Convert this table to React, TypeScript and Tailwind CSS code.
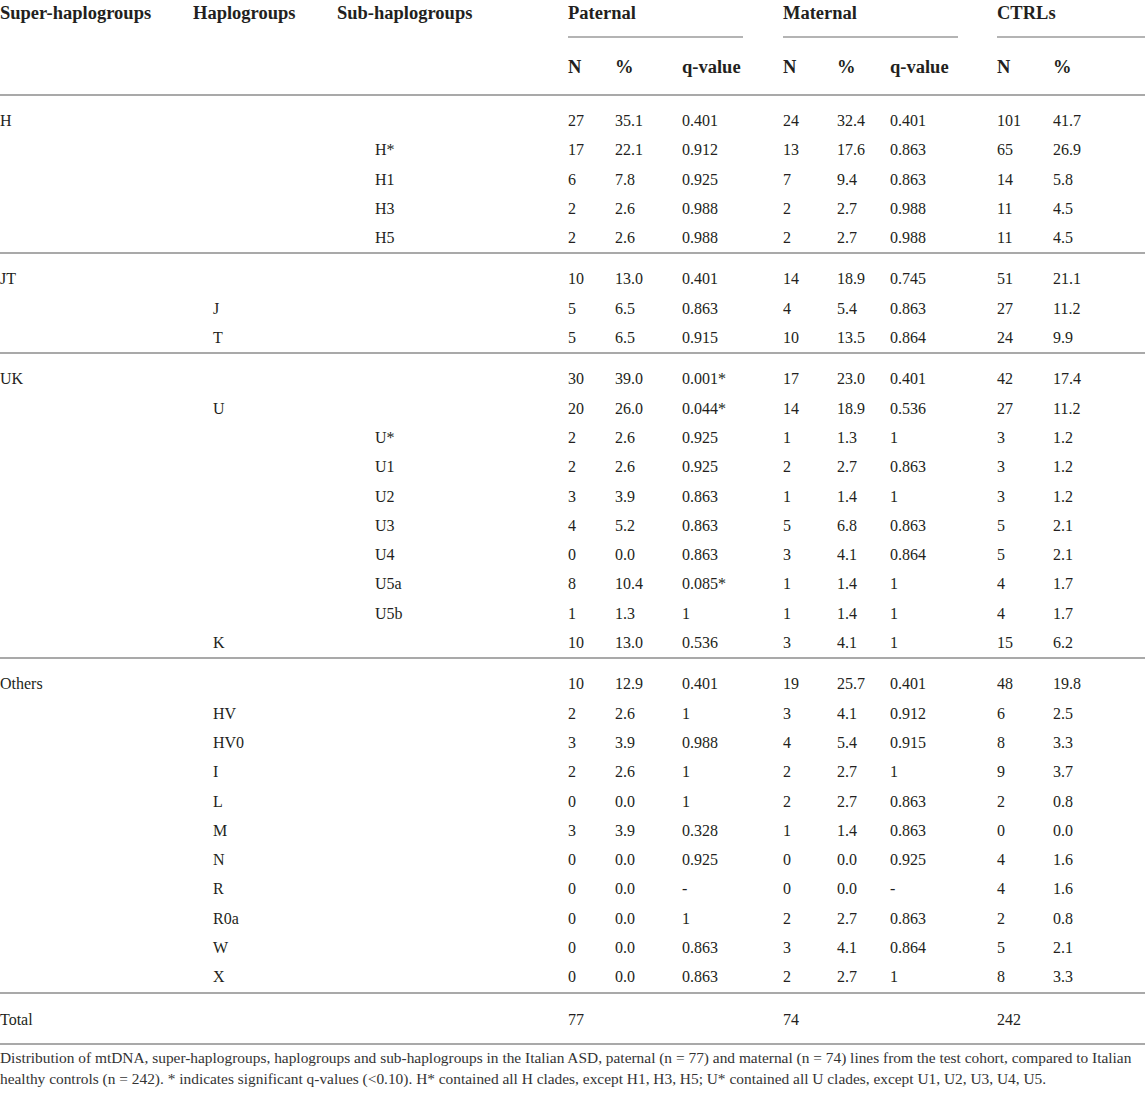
import React from "react";

type Row = string[];

const groups: Row[][] = [
  [
    ["H", "", "", "27", "35.1", "0.401", "24", "32.4", "0.401", "101", "41.7"],
    ["", "", "H*", "17", "22.1", "0.912", "13", "17.6", "0.863", "65", "26.9"],
    ["", "", "H1", "6", "7.8", "0.925", "7", "9.4", "0.863", "14", "5.8"],
    ["", "", "H3", "2", "2.6", "0.988", "2", "2.7", "0.988", "11", "4.5"],
    ["", "", "H5", "2", "2.6", "0.988", "2", "2.7", "0.988", "11", "4.5"],
  ],
  [
    ["JT", "", "", "10", "13.0", "0.401", "14", "18.9", "0.745", "51", "21.1"],
    ["", "J", "", "5", "6.5", "0.863", "4", "5.4", "0.863", "27", "11.2"],
    ["", "T", "", "5", "6.5", "0.915", "10", "13.5", "0.864", "24", "9.9"],
  ],
  [
    ["UK", "", "", "30", "39.0", "0.001*", "17", "23.0", "0.401", "42", "17.4"],
    ["", "U", "", "20", "26.0", "0.044*", "14", "18.9", "0.536", "27", "11.2"],
    ["", "", "U*", "2", "2.6", "0.925", "1", "1.3", "1", "3", "1.2"],
    ["", "", "U1", "2", "2.6", "0.925", "2", "2.7", "0.863", "3", "1.2"],
    ["", "", "U2", "3", "3.9", "0.863", "1", "1.4", "1", "3", "1.2"],
    ["", "", "U3", "4", "5.2", "0.863", "5", "6.8", "0.863", "5", "2.1"],
    ["", "", "U4", "0", "0.0", "0.863", "3", "4.1", "0.864", "5", "2.1"],
    ["", "", "U5a", "8", "10.4", "0.085*", "1", "1.4", "1", "4", "1.7"],
    ["", "", "U5b", "1", "1.3", "1", "1", "1.4", "1", "4", "1.7"],
    ["", "K", "", "10", "13.0", "0.536", "3", "4.1", "1", "15", "6.2"],
  ],
  [
    ["Others", "", "", "10", "12.9", "0.401", "19", "25.7", "0.401", "48", "19.8"],
    ["", "HV", "", "2", "2.6", "1", "3", "4.1", "0.912", "6", "2.5"],
    ["", "HV0", "", "3", "3.9", "0.988", "4", "5.4", "0.915", "8", "3.3"],
    ["", "I", "", "2", "2.6", "1", "2", "2.7", "1", "9", "3.7"],
    ["", "L", "", "0", "0.0", "1", "2", "2.7", "0.863", "2", "0.8"],
    ["", "M", "", "3", "3.9", "0.328", "1", "1.4", "0.863", "0", "0.0"],
    ["", "N", "", "0", "0.0", "0.925", "0", "0.0", "0.925", "4", "1.6"],
    ["", "R", "", "0", "0.0", "-", "0", "0.0", "-", "4", "1.6"],
    ["", "R0a", "", "0", "0.0", "1", "2", "2.7", "0.863", "2", "0.8"],
    ["", "W", "", "0", "0.0", "0.863", "3", "4.1", "0.864", "5", "2.1"],
    ["", "X", "", "0", "0.0", "0.863", "2", "2.7", "1", "8", "3.3"],
  ],
];

const totalRow: Row = ["Total", "", "", "77", "", "", "74", "", "", "242", ""];

const GRID =
  "grid grid-cols-[193px_144px_231px_47px_67px_101px_54px_53px_107px_56px_92px]";

function DataRow({ row }: { row: Row }) {
  return (
    <div className={`${GRID} h-[29.3px] items-center leading-[29.3px]`}>
      {row.map((c, i) => (
        <div
          key={i}
          className={
            i === 1 ? "pl-[20px] whitespace-nowrap" : i === 2 ? "pl-[38px] whitespace-nowrap" : "whitespace-nowrap"
          }
        >
          {c}
        </div>
      ))}
    </div>
  );
}

export default function App() {
  return (
    <div
      className="w-[1145px] bg-white text-[#231f20]"
      style={{ fontFamily: '"Liberation Serif", "Times New Roman", serif' }}
    >
      {/* Header */}
      <div className="border-b-2 border-[#a9a9a9] text-[18.5px] font-bold">
        <div className={`${GRID} leading-[26px]`}>
          <div className="whitespace-nowrap">Super-haplogroups</div>
          <div className="whitespace-nowrap">Haplogroups</div>
          <div className="whitespace-nowrap">Sub-haplogroups</div>
          <div className="col-span-3 mr-[40px] border-b-2 border-[#b4b4b4] pb-[10px]">Paternal</div>
          <div className="col-span-3 mr-[39px] border-b-2 border-[#b4b4b4] pb-[10px]">Maternal</div>
          <div className="col-span-2 border-b-2 border-[#b4b4b4] pb-[10px]">CTRLs</div>
        </div>
        <div className={`${GRID} pt-[16px] pb-[14px] leading-[26px]`}>
          <div />
          <div />
          <div />
          <div>N</div>
          <div>%</div>
          <div>q-value</div>
          <div>N</div>
          <div>%</div>
          <div>q-value</div>
          <div>N</div>
          <div>%</div>
        </div>
      </div>

      {/* Body */}
      <div className="text-[16px]">
        {groups.map((g, gi) => (
          <div key={gi} className="border-b-2 border-[#a9a9a9] pt-[10px]">
            {g.map((r, ri) => (
              <DataRow key={ri} row={r} />
            ))}
          </div>
        ))}
        <div className="border-b-2 border-[#a9a9a9] pt-[11px] pb-[9px]">
          <DataRow row={totalRow} />
        </div>
      </div>

      {/* Footnote */}
      <div className="pt-[2px] text-[15.4px] leading-[21px] text-[#333] whitespace-nowrap">
        Distribution of mtDNA, super-haplogroups, haplogroups and sub-haplogroups in the Italian ASD, paternal (n = 77) and
        maternal (n = 74) lines from the test cohort, compared to Italian
        <br />
        healthy controls (n = 242). * indicates significant q-values (&lt;0.10). H* contained all H clades, except H1, H3,
        H5; U* contained all U clades, except U1, U2, U3, U4, U5.
      </div>
    </div>
  );
}
